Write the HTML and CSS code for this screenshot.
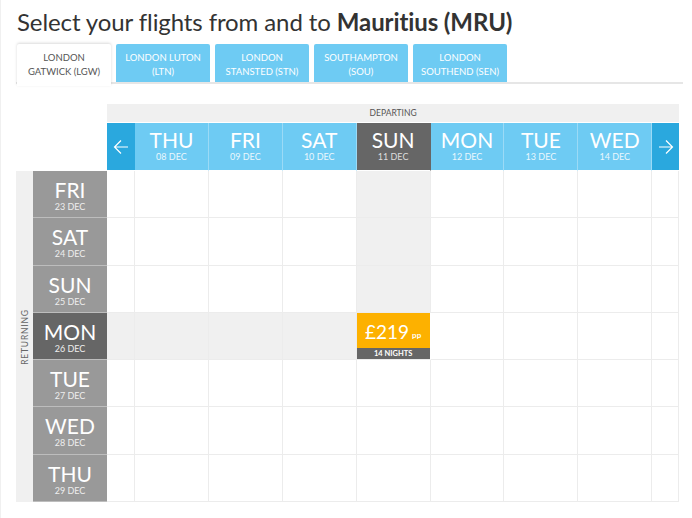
FILE: index.html
```html
<!DOCTYPE html>
<html lang="en">
<head>
<meta charset="UTF-8" />
<title>Select your flights</title>
<link rel="stylesheet" href="styles.css">
</head>
<body>
<div class="page">
  <h1 class="title">Select your flights from and to <b>Mauritius (MRU)</b></h1>

  <div class="tabs">
    <div class="tab active">London<br>Gatwick (LGW)</div>
    <div class="tab">London Luton<br>(LTN)</div>
    <div class="tab">London<br>Stansted (STN)</div>
    <div class="tab">Southampton<br>(SOU)</div>
    <div class="tab">London<br>Southend (SEN)</div>
  </div>

  <div class="calendar">
    <div class="corner"></div>
    <div class="departing">Departing</div>

    <div class="corner"></div>
    <div class="arrow"><svg width="16" height="16" viewBox="0 0 16 16"><path d="M15 8H1.5M8 1.5L1.5 8L8 14.5" fill="none" stroke="#fff" stroke-width="1.2"/></svg></div>
    <div class="day"><span class="dn">THU</span><span class="dd">08 DEC</span></div>
    <div class="day"><span class="dn">FRI</span><span class="dd">09 DEC</span></div>
    <div class="day"><span class="dn">SAT</span><span class="dd">10 DEC</span></div>
    <div class="day sel"><span class="dn">SUN</span><span class="dd">11 DEC</span></div>
    <div class="day"><span class="dn">MON</span><span class="dd">12 DEC</span></div>
    <div class="day"><span class="dn">TUE</span><span class="dd">13 DEC</span></div>
    <div class="day"><span class="dn">WED</span><span class="dd">14 DEC</span></div>
    <div class="arrow"><svg width="16" height="16" viewBox="0 0 16 16"><path d="M1 8H14.5M8 1.5L14.5 8L8 14.5" fill="none" stroke="#fff" stroke-width="1.2"/></svg></div>

    <div class="strip"><span>Returning</span></div>

    <div class="label"><span class="dn">FRI</span><span class="dd">23 DEC</span></div>
    <div class="cell"></div><div class="cell"></div><div class="cell"></div><div class="cell"></div><div class="cell hl"></div><div class="cell"></div><div class="cell"></div><div class="cell"></div><div class="cell"></div>

    <div class="label"><span class="dn">SAT</span><span class="dd">24 DEC</span></div>
    <div class="cell"></div><div class="cell"></div><div class="cell"></div><div class="cell"></div><div class="cell hl"></div><div class="cell"></div><div class="cell"></div><div class="cell"></div><div class="cell"></div>

    <div class="label"><span class="dn">SUN</span><span class="dd">25 DEC</span></div>
    <div class="cell"></div><div class="cell"></div><div class="cell"></div><div class="cell"></div><div class="cell hl"></div><div class="cell"></div><div class="cell"></div><div class="cell"></div><div class="cell"></div>

    <div class="label sel"><span class="dn">MON</span><span class="dd">26 DEC</span></div>
    <div class="cell hl"></div><div class="cell hl"></div><div class="cell hl"></div><div class="cell hl"></div>
    <div class="cell price">
      <div class="amount">£219<small>pp</small></div>
      <div class="nights">14 NIGHTS</div>
    </div>
    <div class="cell"></div><div class="cell"></div><div class="cell"></div><div class="cell"></div>

    <div class="label"><span class="dn">TUE</span><span class="dd">27 DEC</span></div>
    <div class="cell"></div><div class="cell"></div><div class="cell"></div><div class="cell"></div><div class="cell"></div><div class="cell"></div><div class="cell"></div><div class="cell"></div><div class="cell"></div>

    <div class="label"><span class="dn">WED</span><span class="dd">28 DEC</span></div>
    <div class="cell"></div><div class="cell"></div><div class="cell"></div><div class="cell"></div><div class="cell"></div><div class="cell"></div><div class="cell"></div><div class="cell"></div><div class="cell"></div>

    <div class="label"><span class="dn">THU</span><span class="dd">29 DEC</span></div>
    <div class="cell"></div><div class="cell"></div><div class="cell"></div><div class="cell"></div><div class="cell"></div><div class="cell"></div><div class="cell"></div><div class="cell"></div><div class="cell"></div>
  </div>
</div>
</body>
</html>
```

FILE: styles.css
```css
html, body {
  margin: 0;
  padding: 0;
  background: #fff;
  font-family: Lato, "Open Sans", sans-serif;
  color: #333;
}

.page {
  padding: 0 0 0 15px;
  border-left: 1px solid #f0f0f0;
  height: 518px;
  box-sizing: border-box;
}

.title {
  margin: 0;
  padding: 7px 0 0 1px;
  height: 44px;
  box-sizing: border-box;
  font-size: 24px;
  font-weight: 400;
  color: #333;
  letter-spacing: -0.1px;
}

.title b {
  font-weight: 700;
}

/* tabs */
.tabs {
  display: flex;
  gap: 5px;
  width: 666px;
  border-bottom: 2px solid #e6e6e6;
  height: 38px;
  padding-left: 1px;
}

.tab {
  width: 94px;
  height: 38px;
  box-sizing: border-box;
  padding-top: 7px;
  background: #6ecbf3;
  color: #fff;
  font-size: 9.5px;
  line-height: 14px;
  text-align: center;
  text-transform: uppercase;
  border-radius: 2px 2px 0 0;
}

.tab.active {
  background: #fff;
  color: #555;
  height: 42px;
  box-shadow: 0 -1px 3px rgba(0, 0, 0, 0.15);
  position: relative;
  z-index: 1;
}

/* calendar grid */
.calendar {
  margin-top: 20px;
  display: grid;
  grid-template-columns: 17px 74px 28px repeat(7, 73.9px) 27px;
  grid-template-rows: 19px 48px repeat(7, 47.3px);
  width: 663px;
}

.corner {
  grid-column: span 2;
}

.departing {
  grid-column: span 9;
  background: #f0f0f0;
  border-bottom: 1px solid #fff;
  color: #555;
  font-size: 8.5px;
  text-transform: uppercase;
  text-align: center;
  line-height: 19px;
}

.arrow {
  background: #2aa8de;
  display: flex;
  align-items: center;
  justify-content: center;
  border-bottom: 1px solid #fff;
}

.day {
  background: #6ecbf3;
  color: #fff;
  border-right: 1px solid #9bdaf6;
  border-bottom: 1px solid #fff;
  display: flex;
  flex-direction: column;
  align-items: center;
  padding-top: 6px;
  box-sizing: border-box;
}

.day.sel {
  background: #666;
  border-right-color: #666;
}

.dn {
  font-size: 21px;
  line-height: 22px;
}

.dd {
  font-size: 9px;
  line-height: 12px;
  color: #eaf7fd;
}

.day.sel .dd {
  color: #ddd;
}

.strip {
  grid-row: span 7;
  background: #f0f0f0;
  display: flex;
  align-items: center;
  justify-content: center;
}

.strip span {
  transform: rotate(-90deg);
  font-size: 8.5px;
  letter-spacing: 0.8px;
  text-transform: uppercase;
  color: #666;
  white-space: nowrap;
}

.label {
  background: #999;
  color: #fff;
  border-bottom: 1px solid #bdbdbd;
  display: flex;
  flex-direction: column;
  align-items: center;
  padding-top: 8px;
  box-sizing: border-box;
}

.label .dd {
  color: #eee;
}

.label.sel {
  background: #666;
}

.cell {
  border-right: 1px solid #ececec;
  border-bottom: 1px solid #ececec;
  box-sizing: border-box;
}

.cell.hl {
  background: #f0f0f0;
}

.price {
  display: flex;
  flex-direction: column;
  border-right-color: #fff;
}

.amount {
  flex: 1;
  background: #fdb100;
  color: #fff;
  font-size: 19px;
  display: flex;
  align-items: center;
  justify-content: center;
  padding-top: 2px;
}

.amount small {
  font-size: 8px;
  font-weight: 700;
  margin: 7px 0 0 3px;
}

.nights {
  height: 11px;
  background: #666;
  color: #fff;
  font-size: 7.5px;
  font-weight: 700;
  text-align: center;
  line-height: 11px;
}
```
